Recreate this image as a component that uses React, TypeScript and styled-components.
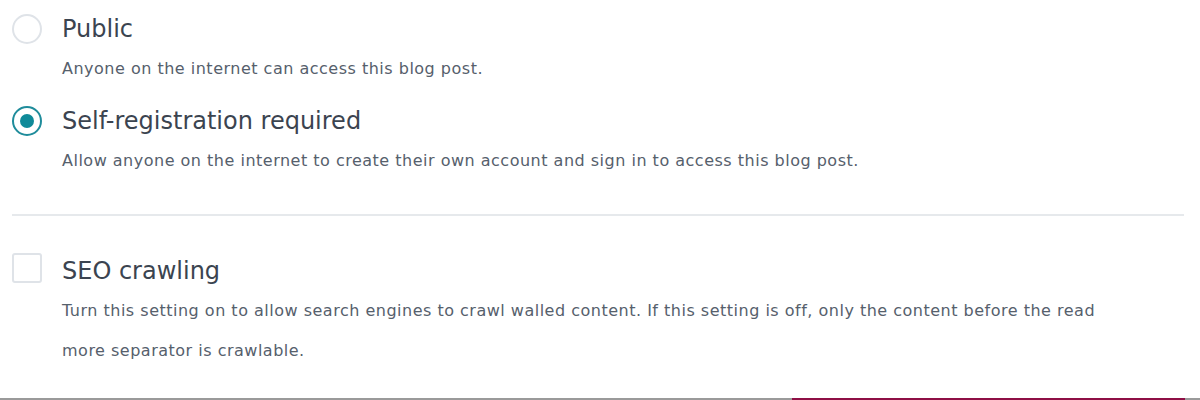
import React, { useState } from "react";
import styled, { createGlobalStyle } from "styled-components";

const Global = createGlobalStyle`
body{
    margin:0;
    background:#fff;
    font-family:"DejaVu Sans","Noto Sans",sans-serif;
}
`
const Page = styled.div`
width:1200px;
height:400px;
display:flex;
flex-direction:column;
box-sizing:border-box;
overflow:hidden;
`
const Content = styled.div`
flex:1;
padding:14px 8px 0 12px;
display:flex;
flex-direction:column;
`
const Option = styled.label<{gap?:number}>`
display:flex;
gap:20px;
margin-bottom:${p=>p.gap ?? 0}px;
cursor:pointer;
`
const Radio = styled.span<{checked:boolean}>`
width:30px;
height:30px;
flex-shrink:0;
box-sizing:border-box;
border-radius:50%;
border:2px solid ${p=>p.checked?'#1f8c9b':'#dfe3e8'};
display:flex;
align-items:center;
justify-content:center;
&::after{
    content:'';
    width:14px;
    height:14px;
    border-radius:50%;
    background:#0f8a99;
    display:${p=>p.checked?'block':'none'};
}
`
const Check = styled.span<{checked:boolean}>`
width:30px;
height:30px;
margin-top:-3px;
flex-shrink:0;
box-sizing:border-box;
border-radius:3px;
border:2px solid #dfe3e8;
background:${p=>p.checked?'#0f8a99':'#fff'};
`
const Body = styled.div`
display:flex;
flex-direction:column;
`
const Title = styled.div`
font-size:24px;
line-height:30px;
color:#3b4450;
`
const Desc = styled.div`
max-width:1060px;
margin-top:5px;
font-size:16px;
letter-spacing:0.5px;
line-height:40px;
color:#56606c;
`
const Divider = styled.hr`
border:none;
border-top:2px solid #e6e9ec;
margin:33px 8px 40px 0;
`
const Track = styled.div`
display:flex;
height:2px;
background:#9a9a9a;
`
const Played = styled.div`
margin-left:792px;
width:393px;
background:#8e0f45;
`

const options = [
    {value:0, name:'Public', desc:'Anyone on the internet can access this blog post.'},
    {value:1, name:'Self-registration required', desc:'Allow anyone on the internet to create their own account and sign in to access this blog post.'},
]

const App = () => {
    const [choice, setchoice] = useState(1)
    const [seo, setseo] = useState(false)
    return (
        <Page>
            <Global />
            <Content>
                {options.map((item,i)=>
                    <Option key={i} gap={i==0?17:0} onClick={()=>setchoice(item.value)}>
                        <Radio checked={choice==item.value} />
                        <Body>
                            <Title>{item.name}</Title>
                            <Desc>{item.desc}</Desc>
                        </Body>
                    </Option>
                )}
                <Divider />
                <Option onClick={()=>setseo(!seo)}>
                    <Check checked={seo} />
                    <Body>
                        <Title>SEO crawling</Title>
                        <Desc>Turn this setting on to allow search engines to crawl walled content. If this setting is off, only the content before the read more separator is crawlable.</Desc>
                    </Body>
                </Option>
            </Content>
            <Track><Played /></Track>
        </Page>
    )
}
export default App
